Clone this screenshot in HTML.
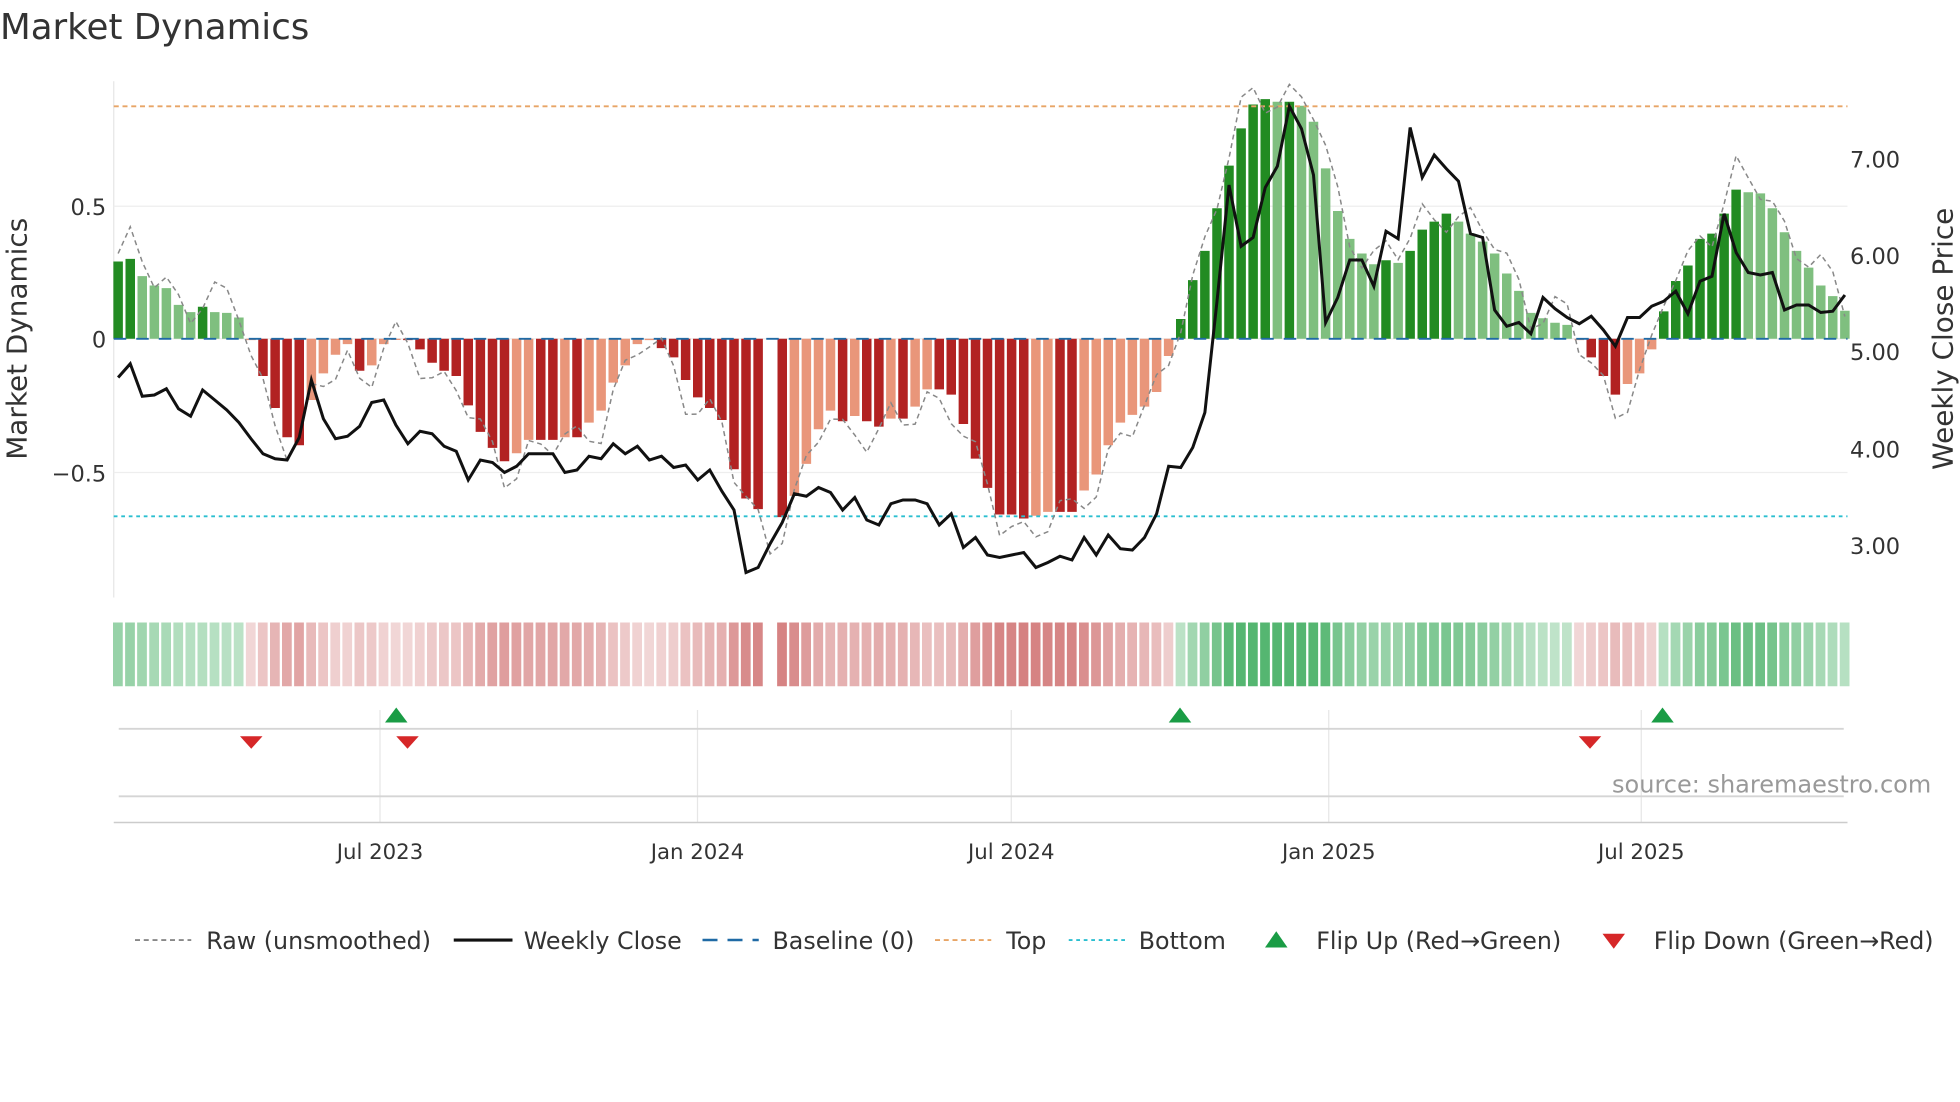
<!DOCTYPE html>
<html><head><meta charset="utf-8"><style>
html,body{margin:0;padding:0;background:#fff;width:1960px;height:1102px;overflow:hidden}
svg{display:block}
text{font-family:"DejaVu Sans","Liberation Sans",sans-serif;fill:#333}
</style></head><body>
<svg id="s" width="1960" height="1102" viewBox="0 0 1568 881.6" xmlns="http://www.w3.org/2000/svg">
<text x="0" y="31" font-size="28.5">Market Dynamics</text>
<line x1="91" y1="65" x2="91" y2="478" stroke="#e6e6e6"/>
<line x1="91" y1="165" x2="1478" y2="165" stroke="#eee"/>
<line x1="91" y1="271" x2="1478" y2="271" stroke="#eee"/>
<line x1="91" y1="378" x2="1478" y2="378" stroke="#eee"/>
<text x="85" y="172" font-size="18" text-anchor="end">0.5</text>
<text x="85" y="278" font-size="18" text-anchor="end">0</text>
<text x="85" y="385" font-size="18" text-anchor="end">−0.5</text>
<text x="1480" y="134" font-size="18">7.00</text>
<text x="1480" y="211" font-size="18">6.00</text>
<text x="1480" y="288" font-size="18">5.00</text>
<text x="1480" y="366" font-size="18">4.00</text>
<text x="1480" y="443" font-size="18">3.00</text>
<text transform="translate(21,271) rotate(-90)" font-size="22.3" text-anchor="middle">Market Dynamics</text>
<text transform="translate(1562,271) rotate(-90)" font-size="22.3" text-anchor="middle">Weekly Close Price</text>
<g id="bars"></g><g id="strip"></g>
<line x1="91" y1="85" x2="1478" y2="85" stroke="#e8a566" stroke-width="1.5" stroke-dasharray="4,3"/>
<line x1="91" y1="413" x2="1478" y2="413" stroke="#2bbfd0" stroke-width="1.5" stroke-dasharray="3,3"/>
<line x1="91" y1="271" x2="1478" y2="271" stroke="#1f6aa5" stroke-width="1.5" stroke-dasharray="10,8"/>
<path id="raw" fill="none" stroke="#888" stroke-width="1.2" stroke-dasharray="4,3"/>
<path id="price" fill="none" stroke="#111" stroke-width="2.4"/>
<g stroke="#e6e6e6">
<line x1="304" y1="568" x2="304" y2="658"/><line x1="558" y1="568" x2="558" y2="658"/><line x1="809" y1="568" x2="809" y2="658"/><line x1="1063" y1="568" x2="1063" y2="658"/><line x1="1313" y1="568" x2="1313" y2="658"/>
</g>
<line x1="95" y1="583" x2="1475" y2="583" stroke="#d5d5d5" stroke-width="1.5"/>
<line x1="95" y1="637" x2="1475" y2="637" stroke="#d5d5d5" stroke-width="1.5"/>
<line x1="91" y1="658" x2="1478" y2="658" stroke="#ccc" stroke-width="1.2"/>
<g fill="#1a9c45"><path d="M308 578 L317 566 L326 578Z"/><path d="M935 578 L944 566 L953 578Z"/><path d="M1321 578 L1330 566 L1339 578Z"/></g>
<g fill="#d62728"><path d="M192 589 L210 589 L201 599Z"/><path d="M317 589 L335 589 L326 599Z"/><path d="M1263 589 L1281 589 L1272 599Z"/></g>
<text x="1545" y="634" font-size="19.2" style="fill:#999" text-anchor="end">source: sharemaestro.com</text>
<g font-size="17">
<text x="304" y="687" text-anchor="middle">Jul 2023</text><text x="558" y="687" text-anchor="middle">Jan 2024</text><text x="809" y="687" text-anchor="middle">Jul 2024</text><text x="1063" y="687" text-anchor="middle">Jan 2025</text><text x="1313" y="687" text-anchor="middle">Jul 2025</text>
</g>
<g font-size="19">
<line x1="108" y1="752" x2="153" y2="752" stroke="#888" stroke-width="1.5" stroke-dasharray="4,3"/><text x="165" y="759">Raw (unsmoothed)</text>
<line x1="363" y1="752" x2="410" y2="752" stroke="#111" stroke-width="2.5"/><text x="419" y="759">Weekly Close</text>
<line x1="562" y1="752" x2="607" y2="752" stroke="#1f6aa5" stroke-width="2" stroke-dasharray="12,8"/><text x="618" y="759">Baseline (0)</text>
<line x1="748" y1="752" x2="793" y2="752" stroke="#e8a566" stroke-width="1.5" stroke-dasharray="4,3"/><text x="805" y="759">Top</text>
<line x1="855" y1="752" x2="900" y2="752" stroke="#2bbfd0" stroke-width="1.5" stroke-dasharray="3,3"/><text x="911" y="759">Bottom</text>
<path d="M1012 758 L1021 745 L1030 758Z" fill="#1a9c45"/><text x="1053" y="759">Flip Up (Red→Green)</text>
<path d="M1282 747 L1300 747 L1291 759Z" fill="#d62728"/><text x="1323" y="759">Flip Down (Green→Red)</text>
</g>
</svg>
<script>
var v=[.29,.3,.235,.2,.19,.127,.1,.12,.1,.097,.08,-.005,
-.14,-.26,-.37,-.4,-.23,-.13,-.06,-.02,-.12,-.1,-.02,
-.003,-.005,-.04,-.09,-.12,-.14,-.25,-.35,-.41,-.46,-.43,-.38,-.38,-.38,-.37,-.37,-.315,-.27,-.165,-.1,-.02,-.005,-.035,-.07,-.155,-.22,-.26,-.305,-.49,-.6,-.64,
null,
-.67,-.59,-.47,-.34,-.27,-.31,-.29,-.31,-.33,-.3,-.3,-.255,-.19,-.19,-.21,-.32,-.45,-.56,-.66,-.66,-.675,-.665,-.65,-.65,-.65,-.57,-.51,-.4,-.315,-.286,-.255,-.2,-.065,
.074,.22,.33,.49,.65,.79,.88,.9,.89,.89,
.875,.815,.64,.48,.375,.32,.28,.295,.285,.33,.41,.44,.47,.44,.395,.365,.32,.245,.18,.097,.077,.06,.052,-.005,-.07,-.14,-.21,-.17,-.13,-.04,.103,.217,.275,.375,.395,.47,.56,.55,.546,.49,.4,.33,.267,.2,.16,.105];
var p=[302,291,317,316,311,327,333,312,320,328,338,351,363,367,368,350,304,335,351,349,341,322,320,340,355,345,347,357,361,384,368,370,378,373,363,363,363,378,376,365,367,355,363,357,368,365,374,372,384,376,393,408,458,
454,435,
418,395,397,390,394,408,398,416,420,403,400,400,403,420,411,438,430,444,446,444,442,454,450,445,448,430,444,428,439,440,430,411,373,
374,358,330,241,148,197,190,150,133,85,
103,140,258,238,208,208,229,185,191,102,142,124,135,145,187,190,248,261,258,267,238,247,254,259,253,264,277,254,254,245,241,233,251,225,221,171,202,218,220,218,248,244,244,250,249,236];
var b='',s='',sp=9.66,X=function(i){return 94.5+i*sp};
for(var i=0;i<v.length;i++){var a=v[i];if(a==null)continue;var x=X(i)-3.8;
var prev=i>0&&v[i-1]!=null?v[i-1]:a;var rising=Math.abs(a)>=Math.abs(prev);
var c=a>=0?(rising?'#228b22':'#7fbf7f'):(rising?'#b22222':'#e9967a');
var y=271-a*213;b+='<rect x="'+x.toFixed(1)+'" y="'+Math.min(y,271).toFixed(1)+'" width="7.6" height="'+Math.max(Math.abs(a*213),1).toFixed(1)+'" fill="'+c+'"/>';
var op=0.25+Math.min(Math.abs(a),0.7)*0.75;var sc=a>=0?'34,160,70':'200,90,90';
s+='<rect x="'+(x-0.3).toFixed(1)+'" y="498" width="7.8" height="51" fill="rgba('+sc+','+op.toFixed(2)+')"/>';}
document.getElementById('bars').innerHTML=b;document.getElementById('strip').innerHTML=s;
var d='',r='';for(var i=0;i<p.length;i++){d+=(i?'L':'M')+X(i).toFixed(1)+' '+p[i];}
document.getElementById('price').setAttribute('d',d);
for(var i=0;i<v.length;i++){var a=v[i];if(a==null)a=-0.7;var n=Math.sin(i*1.7)*0.06+Math.sin(i*0.9)*0.04+(a>0?0.03:-0.03);r+=(i?'L':'M')+X(i).toFixed(1)+' '+(271-(a+n)*213).toFixed(1);}
document.getElementById('raw').setAttribute('d',r);
</script>
</body></html>
